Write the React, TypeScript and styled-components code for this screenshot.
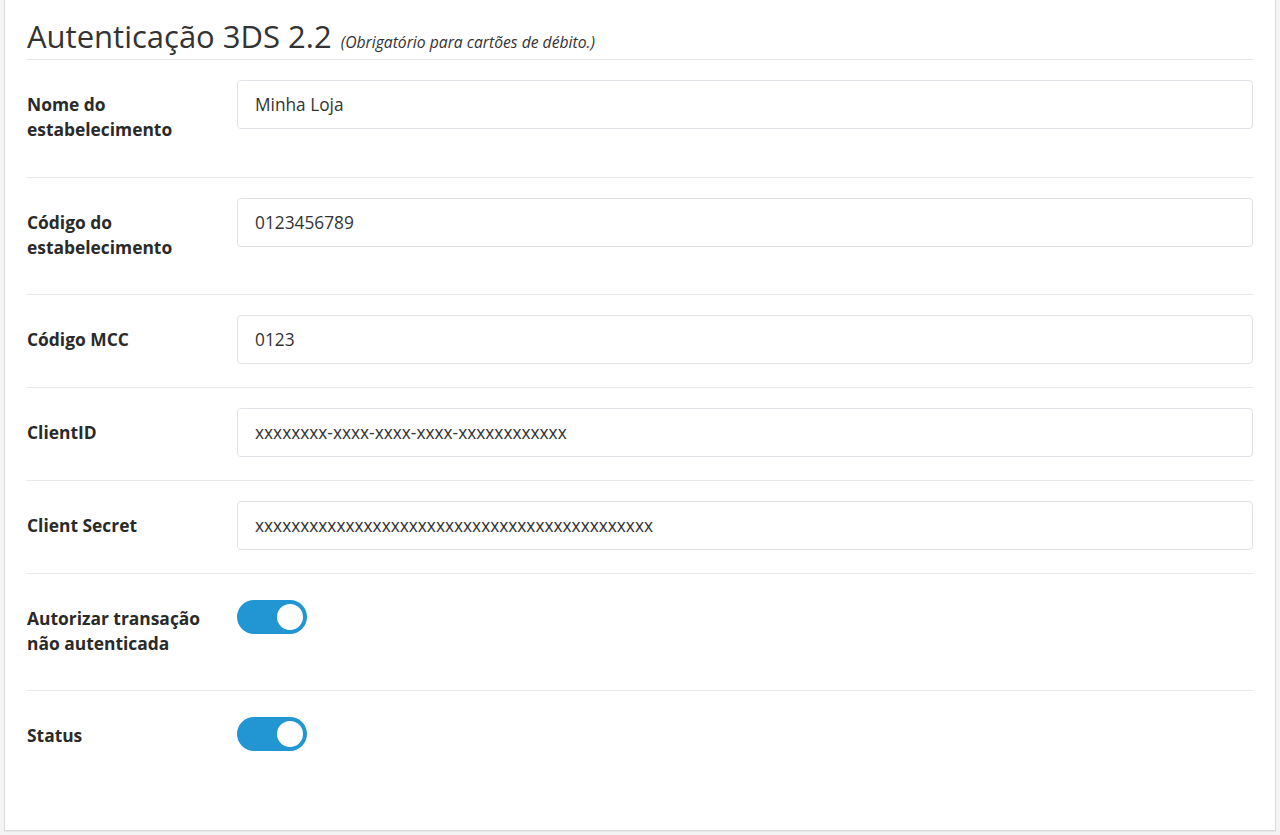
import React, { useState } from "react";
import styled, { createGlobalStyle } from "styled-components";

const Global = createGlobalStyle`
  html, body { margin: 0; padding: 0; background: #f4f4f4; }
  body { font-family: "Open Sans", "Liberation Sans", sans-serif; color: #333; }
  * { box-sizing: border-box; }
`;

const Page = styled.div`
  padding: 0 4px 3px 4px;
`;

const Panel = styled.section`
  background: #fff;
  border: 1px solid #dcdcdc;
  border-top: none;
  box-shadow: 0 1px 1px rgba(0, 0, 0, 0.05);
  padding: 19px 22px 48px 22px;
`;

const Title = styled.h2`
  margin: 0;
  font-size: 31px;
  font-weight: 400;
  line-height: 34px;
  padding-bottom: 0;
  color: #333;
  border-bottom: 1px solid #e5e5e5;
`;

const Note = styled.small`
  font-size: 15.7px;
  font-style: italic;
  font-weight: 400;
  color: #333;
  margin-left: 9px;
`;

const Row = styled.div<{ last?: boolean }>`
  display: grid;
  grid-template-columns: 210px 1fr;
  align-items: start;
  padding: 20px 0 23px;
  border-bottom: ${(p) => (p.last ? "none" : "1px solid #eaeaea")};

  &:first-of-type {
    padding-bottom: 24px;
  }
`;

const Label = styled.label`
  font-size: 17.4px;
  font-weight: 700;
  line-height: 25px;
  padding: 12px 16px 11px 0;
  color: #2a2a2a;
`;

const Input = styled.input`
  height: 49px;
  width: 100%;
  border: 1px solid #dfe2e7;
  border-radius: 4px;
  padding: 0 17px;
  font-family: "Open Sans", "Liberation Sans", sans-serif;
  font-size: 17.3px;
  color: #333;
  background: #fff;
  outline: none;
`;

const SwitchWrap = styled.div`
  padding-top: 6px;
`;

const Track = styled.button<{ on: boolean }>`
  position: relative;
  width: 70px;
  height: 34px;
  border: none;
  border-radius: 17px;
  background: ${(p) => (p.on ? "#2196d3" : "#ccc")};
  cursor: pointer;
  padding: 0;
  display: block;
`;

const Knob = styled.span<{ on: boolean }>`
  position: absolute;
  top: 4px;
  left: ${(p) => (p.on ? "40px" : "4px")};
  width: 26px;
  height: 26px;
  border-radius: 50%;
  background: #fff;
  transition: left 0.2s;
`;

const Toggle: React.FC<{ initial?: boolean }> = ({ initial = true }) => {
  const [on, setOn] = useState(initial);
  return (
    <SwitchWrap>
      <Track on={on} onClick={() => setOn(!on)} aria-pressed={on}>
        <Knob on={on} />
      </Track>
    </SwitchWrap>
  );
};

const fields = [
  { label: <>Nome do<br />estabelecimento</>, value: "Minha Loja" },
  { label: <>Código do<br />estabelecimento</>, value: "0123456789" },
  { label: <>Código MCC</>, value: "0123" },
  { label: <>ClientID</>, value: "xxxxxxxx-xxxx-xxxx-xxxx-xxxxxxxxxxxx" },
  { label: <>Client Secret</>, value: "xxxxxxxxxxxxxxxxxxxxxxxxxxxxxxxxxxxxxxxxxxxx" },
];

export default function App() {
  return (
    <>
      <Global />
      <Page>
        <Panel>
          <Title>
            Autenticação 3DS 2.2<Note>(Obrigatório para cartões de débito.)</Note>
          </Title>
          {fields.map((f, i) => (
            <Row key={i}>
              <Label>{f.label}</Label>
              <Input defaultValue={f.value} />
            </Row>
          ))}
          <Row>
            <Label>Autorizar transação<br />não autenticada</Label>
            <Toggle />
          </Row>
          <Row last>
            <Label>Status</Label>
            <Toggle />
          </Row>
        </Panel>
      </Page>
    </>
  );
}
